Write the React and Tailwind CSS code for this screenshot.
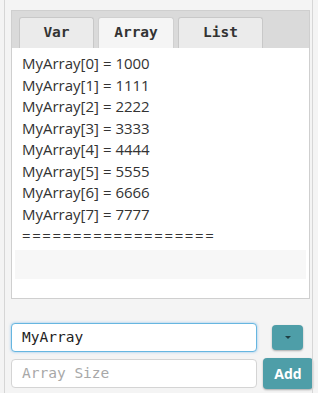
import React from "react";

const rows = [
  ["0", "1000"], ["1", "1111"], ["2", "2222"], ["3", "3333"],
  ["4", "4444"], ["5", "5555"], ["6", "6666"], ["7", "7777"],
];

export default function App() {
  const mono = { fontFamily: '"DejaVu Sans Mono", "Liberation Mono", monospace' };
  return (
    <div className="w-[318px] h-[393px] bg-[#f4f4f4] overflow-hidden relative">
      <div className="absolute left-[4px] top-0 bottom-0 w-px bg-[#d6d6d6]" />
      <div className="absolute right-[5px] top-0 bottom-0 w-px bg-[#d6d6d6]" />
      <div className="pl-[11px] pr-[8px] pt-[10px]">
        <div className="bg-[#dadada] border border-[#cfcfcf] border-b-0 h-[38px] flex items-end gap-[4px] pl-[7px]">
          {["Var", "Array", "List"].map((t, i) => (
            <div
              key={t}
              className={
                "h-[31px] rounded-t-[3px] border border-b-0 flex items-center justify-center text-[14.5px] font-bold text-[#333] " +
                (i === 1 ? "bg-[#f5f5f5] border-[#d0d0d0] w-[76px]" : i === 0 ? "bg-[#ebebeb] border-[#c8c8c8] w-[75px]" : "bg-[#ebebeb] border-[#c8c8c8] w-[85px]")
              }
              style={mono}
            >
              {t}
            </div>
          ))}
        </div>
        <div className="bg-white border border-[#cfcfcf] border-t-0 h-[251px] pt-[5px] px-[3px]" style={{ fontFamily: '"Open Sans", "Noto Sans", sans-serif' }}>
          <div className="pl-[7px] text-[15px] leading-[21.5px] text-[#333]">
            {rows.map(([i, v]) => (
              <div key={i}>MyArray[{i}] = {v}</div>
            ))}
            <div className="tracking-[1.6px]">===================</div>
          </div>
          <div className="mt-[3px] h-[29px] bg-[#f7f7f7]" />
        </div>
      </div>
      <div className="pl-[11px] pr-[5px] mt-[24px] flex flex-col gap-[6px]">
        <div className="flex items-center">
          <div className="w-[246px] h-[29px] rounded-[4px] border border-[#66b6e0] shadow-[0_0_3px_rgba(102,175,233,0.7)] bg-white flex items-center pl-[10px] text-[14.5px] text-[#222]" style={mono}>
            MyArray
          </div>
          <div className="ml-[15px] w-[31px] h-[25px] rounded-[4px] bg-[#4e9ea8] shadow-[0_1px_2px_rgba(0,0,0,0.3)] flex items-center justify-center">
            <div className="w-0 h-0 border-l-[3px] border-r-[3px] border-t-[3px] border-l-transparent border-r-transparent border-t-[#1f3f44]" />
          </div>
        </div>
        <div className="flex items-center">
          <div className="w-[246px] h-[29px] rounded-[4px] border border-[#d4d4d4] bg-white flex items-center pl-[10px] text-[14.5px] text-[#a8a8a8]" style={mono}>
            Array Size
          </div>
          <div className="ml-[6px] w-[50px] h-[31px] rounded-[4px] bg-[#4e9ea8] shadow-[0_1px_2px_rgba(0,0,0,0.3)] flex items-center justify-center text-white font-bold text-[14px]" style={{ fontFamily: '"Open Sans", "Noto Sans", sans-serif' }}>
            Add
          </div>
        </div>
      </div>
    </div>
  );
}
